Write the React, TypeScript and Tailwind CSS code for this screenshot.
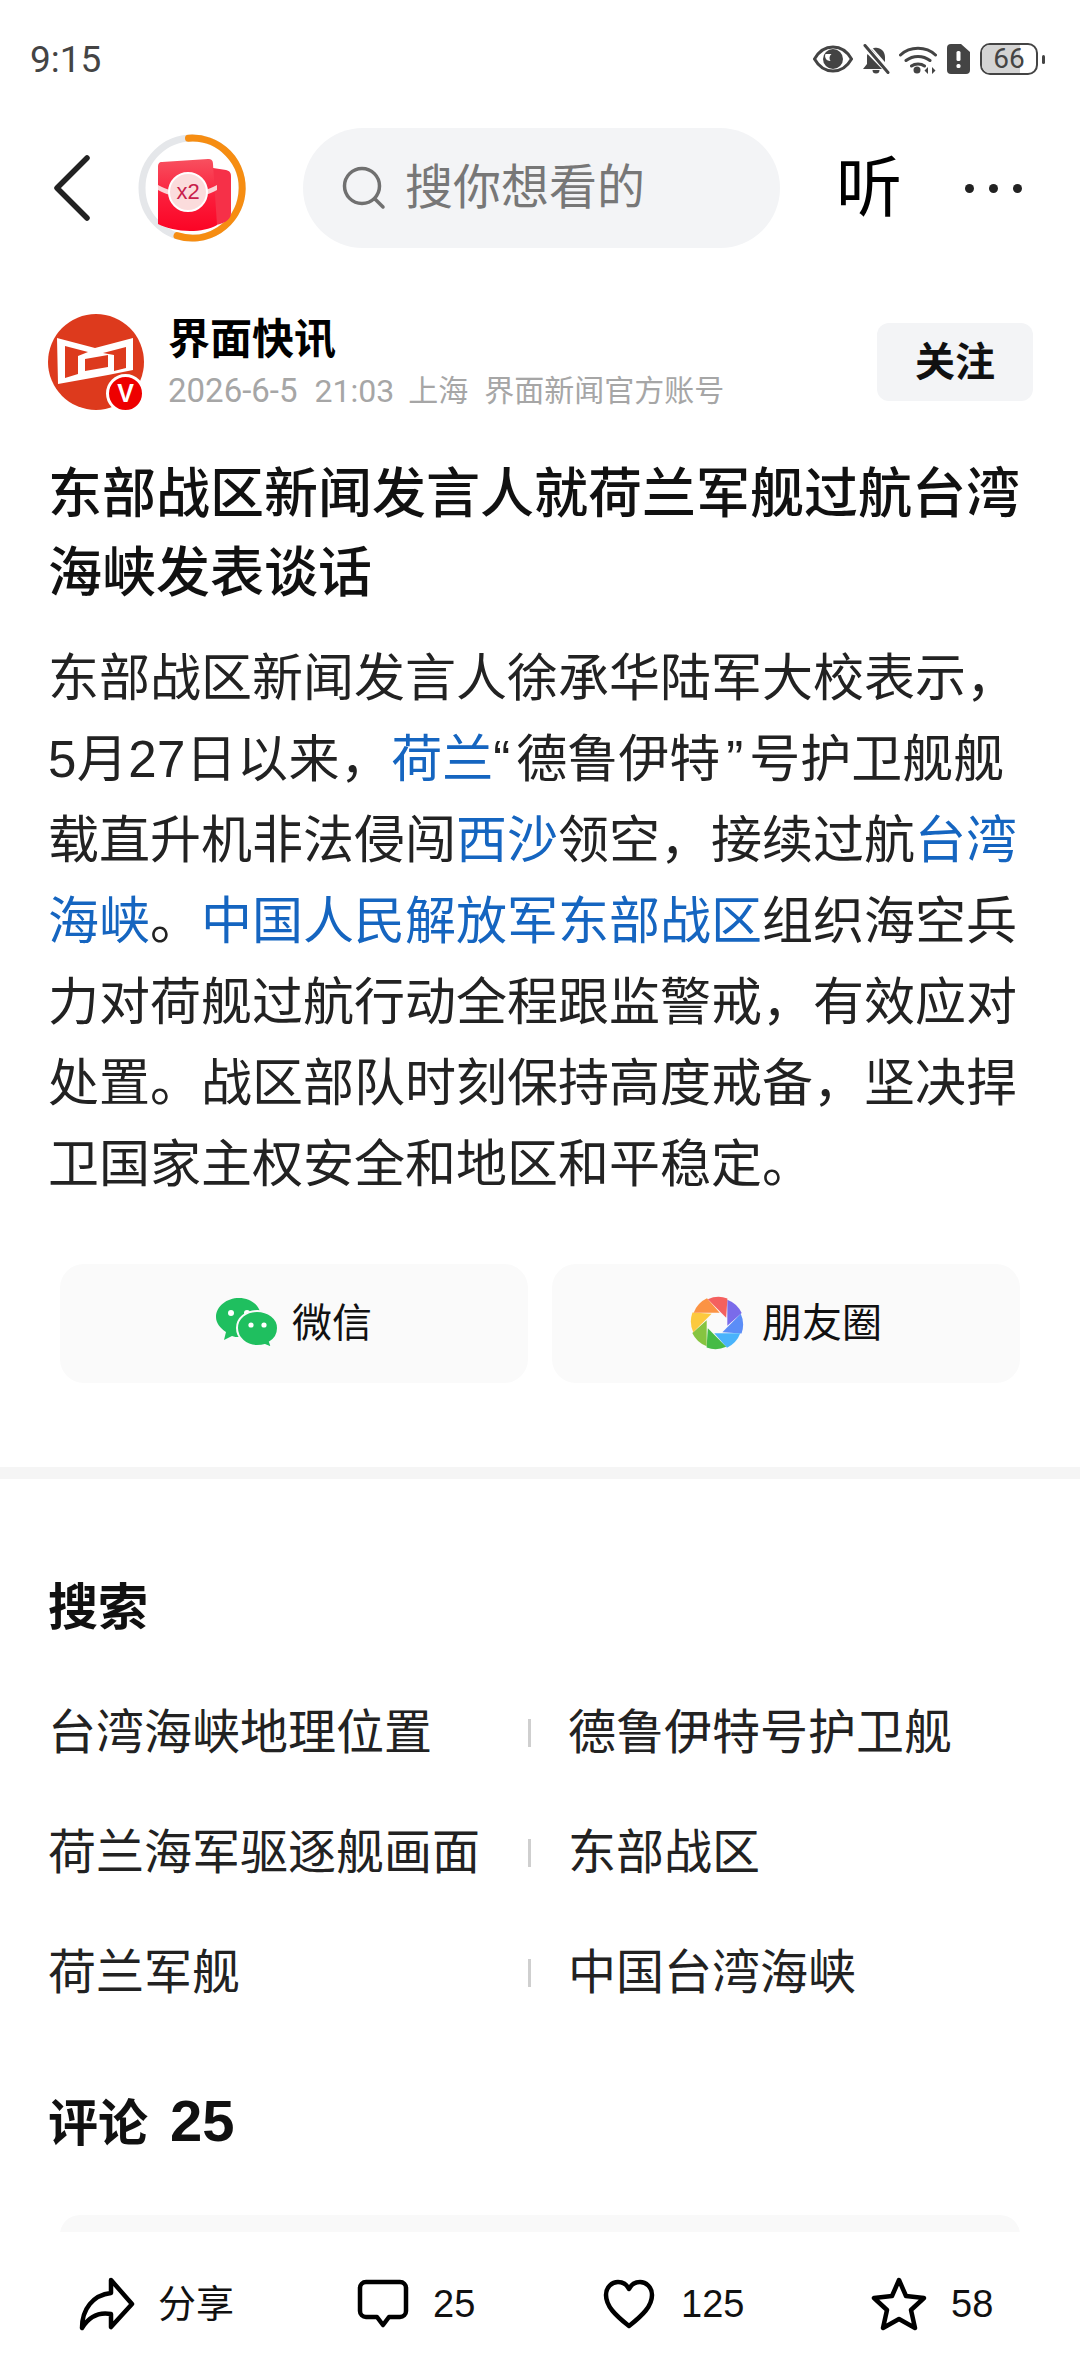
const body: { text: string; className?: string }[][] = [
  [{ text: "东部战区新闻发言人徐承华陆军大校表示，" }],
  [
    { text: "5月27日以来，", className: "tracking-[0.4px]" },
    { text: "荷兰", className: "text-[#1565c0]" },
    { text: "“", className: "mr-[6px]" },
    { text: "德鲁伊特" },
    { text: "”", className: "ml-[6px] mr-[6px]" },
    { text: "号护卫舰舰" },
  ],
  [
    { text: "载直升机非法侵闯" },
    { text: "西沙", className: "text-[#1565c0]" },
    { text: "领空，接续过航" },
    { text: "台湾", className: "text-[#1565c0]" },
  ],
  [
    { text: "海峡", className: "text-[#1565c0]" },
    { text: "。" },
    { text: "中国人民解放军东部战区", className: "text-[#1565c0]" },
    { text: "组织海空兵" },
  ],
  [{ text: "力对荷舰过航行动全程跟监警戒，有效应对" }],
  [{ text: "处置。战区部队时刻保持高度戒备，坚决捍" }],
  [{ text: "卫国家主权安全和地区和平稳定。" }],
];

const searches = [
  ["台湾海峡地理位置", "德鲁伊特号护卫舰"],
  ["荷兰海军驱逐舰画面", "东部战区"],
  ["荷兰军舰", "中国台湾海峡"],
];

function StatusIcons() {
  return (
    <div className="flex items-center">
      {/* eye */}
      <svg width="40" height="28" viewBox="0 0 40 28">
        <path d="M1.500 14C6 6 12.500 2 20 2S34 6 38.500 14C34 22 27.500 26 20 26S6 22 1.500 14Z" fill="none" stroke="#444" strokeWidth="3" />
        <circle cx="20" cy="14" r="10" fill="#444" />
        <path d="M12.500 9h6a5 5 0 0 0-1 7 5 5 0 0 1-5-7Z" fill="#fff" />
      </svg>
      {/* muted bell */}
      <svg className="ml-[10px]" width="27" height="30" viewBox="0 0 27 30">
        <path d="M11 4c5-1.500 11 2 11 9v6L8.500 5.500C9.300 4.800 10 4.300 11 4ZM4.500 10L19 25H0l4-5v-8c0-.700.200-1.300.500-2Z" fill="#444" />
        <path d="M9.500 26h7a3.500 3.500 0 0 1-7 0Z" fill="#444" />
        <path d="M2 1.500L25 28.500" stroke="#444" strokeWidth="3" strokeLinecap="round" />
        <path d="M5 0L27 25" stroke="#fff" strokeWidth="1.500" />
      </svg>
      {/* wifi */}
      <svg className="ml-[9px]" width="38" height="29" viewBox="0 0 38 29">
        <path d="M1.500 10C11 1 27 1 36.500 10M7 15.500c7-5.500 17-5.500 24 0M12.500 21c3.500-2.800 9.500-2.800 13 0" fill="none" stroke="#444" strokeWidth="3" strokeLinecap="round" />
        <circle cx="18" cy="25" r="3.500" fill="#444" />
        <path d="M29 22l-3.500 3.500 3.500 3.500ZM33 22l3.500 3.500-3.500 3.500Z" fill="#444" />
      </svg>
      {/* sim */}
      <svg className="ml-[10px]" width="23" height="30" viewBox="0 0 23 30">
        <path d="M4 0h10l9 8v18a4 4 0 0 1-4 4H4a4 4 0 0 1-4-4V4a4 4 0 0 1 4-4Z" fill="#444" />
        <rect x="9.500" y="7" width="4" height="10" rx="1.500" fill="#fff" />
        <rect x="9.500" y="20" width="4" height="4" rx="1.500" fill="#fff" />
      </svg>
      {/* battery */}
      <div className="ml-[10px] relative w-[58px] h-[32px] rounded-[10px] border-2 border-[#444] overflow-hidden flex items-center justify-center">
        <div className="absolute left-0 top-0 bottom-0 w-[71%] bg-[#d4d4d4]" />
        <span className="relative font-['Roboto',sans-serif] text-[28px] leading-none text-[#444]">66</span>
      </div>
      <div className="ml-[4px] w-[3px] h-[9px] rounded-full bg-[#444]" />
    </div>
  );
}

function RedPacket() {
  return (
    <svg width="112" height="112" viewBox="0 0 112 112">
      <defs>
        <linearGradient id="packet" x1="0" y1="0" x2="0" y2="1">
          <stop offset="0" stopColor="#f8505f" />
          <stop offset="0.55" stopColor="#fb1c3a" />
          <stop offset="1" stopColor="#fb0425" />
        </linearGradient>
      </defs>
      <circle cx="56" cy="56" r="50" fill="none" stroke="#e5e7ea" strokeWidth="7" />
      <path d="M52.500 6.200A50 50 0 1 1 41 103.700" fill="none" stroke="#f68d12" strokeWidth="7" strokeLinecap="round" />
      <path d="M77 36l13 2c4 1 5 3 5 7v36c0 6-5 9-11 11l-7 2Z" fill="#f63048" />
      <path d="M22 35c0-3 1-5 4-5l46-3c3 0 5 1 5 5l4 61c-7 4-17 6-27 6-12 0-24-3-32-7Z" fill="url(#packet)" />
      <path d="M22 53c9 5 18 7 30 7 11 0 20-2 29-7v5c-9 5-18 7-29 7-12 0-21-2-30-7Z" fill="#fbd3d6" />
      <circle cx="52" cy="60" r="19" fill="#fbdcdc" stroke="#fff" strokeWidth="2" />
      <text x="52" y="67" textAnchor="middle" fontSize="22" fontFamily="'Liberation Sans', sans-serif" fill="#c8204a">x2</text>
    </svg>
  );
}

function Avatar() {
  return (
    <div className="relative w-[97px] h-[97px] shrink-0">
      <svg width="96" height="96" viewBox="0 0 96 96">
        <circle cx="48" cy="48" r="48" fill="#dd3a1d" />
        <path
          d="M9 24L47 34 85 24V56L60 61 10 70ZM17 32V64L30 60V42L40 38ZM78 33L55 39 66 41V57L78 54ZM37 45V57L60 53V41Z"
          fill="#fff"
          fillRule="evenodd"
        />
      </svg>
      <div className="absolute left-[58px] top-[60px] w-[39px] h-[39px] rounded-full bg-[#ee0000] border-[3px] border-white flex items-center justify-center text-white text-[25px] font-bold leading-none">
        V
      </div>
    </div>
  );
}

function WeChat() {
  return (
    <svg width="62" height="50" viewBox="0 0 62 50">
      <path d="M23 0c12 0 22 8 22 19 0 11-10 20-22 20-2 0-5 0-7-1l-8 4 2-8C4 30 0 25 0 19 0 8 11 0 23 0Z" fill="#1fbf5f" />
      <circle cx="15" cy="15" r="3" fill="#fff" />
      <circle cx="31" cy="15" r="3" fill="#fff" />
      <path d="M41 13c11 0 21 7 21 17 0 6-3 11-8 14l2 6-7-3c-3 1-5 1-8 1-11 0-20-8-20-18s9-17 20-17Z" fill="#1fbf5f" stroke="#fafafa" strokeWidth="2" />
      <circle cx="35" cy="27" r="2.600" fill="#fff" />
      <circle cx="48" cy="27" r="2.600" fill="#fff" />
    </svg>
  );
}

function Moments() {
  const colors = ["#7a6bea", "#5b8df7", "#49b3fb", "#46bb46", "#86c440", "#fcc93d", "#fb9344", "#f4605f"];
  return (
    <svg width="54" height="54" viewBox="-27 -27 54 54">
      {colors.map((c, i) => (
        <path key={c} d="M10.300 -23.300A26 26 0 0 1 24.700 -10L10.300 2.700Z" fill={c} transform={`rotate(${i * 45})`} />
      ))}
    </svg>
  );
}

function BottomBar() {
  const iconClass = "fill-none stroke-black";
  return (
    <div className="h-[144px] shrink-0 flex items-center text-[38px] text-[#111]">
      <svg className={`${iconClass} ml-[79px]`} width="56" height="54" viewBox="0 0 56 54" strokeWidth="4.500" strokeLinejoin="round">
        <path d="M32 3L53 27 32 50V37C21 35 11 38 3 51 3 32 14 18 32 16Z" />
      </svg>
      <span className="ml-[23px] w-[76px]">分享</span>
      <svg className={`${iconClass} ml-[123px]`} width="52" height="50" viewBox="0 0 52 50" strokeWidth="4.500" strokeLinejoin="round">
        <path d="M9 3H43a6 6 0 0 1 6 6V32a6 6 0 0 1-6 6H32L26 46 20 38H9a6 6 0 0 1-6-6V9a6 6 0 0 1 6-6Z" />
      </svg>
      <span className="ml-[24px] w-[44px]">25</span>
      <svg className={`${iconClass} ml-[126px]`} width="52" height="50" viewBox="0 0 52 50" strokeWidth="4.500" strokeLinejoin="round">
        <path d="M26 47C12 36 3 27 3 16 3 8 9 3 15 3 20 3 24 6 26 10 28 6 32 3 37 3 43 3 49 8 49 16 49 27 40 36 26 47Z" />
      </svg>
      <span className="ml-[26px] w-[64px]">125</span>
      <svg className={`${iconClass} ml-[126px]`} width="56" height="54" viewBox="0 0 56 54" strokeWidth="4.500" strokeLinejoin="round">
        <path d="M28 3L35 19 53 21 40 33 44 51 28 42 12 51 16 33 3 21 21 19Z" />
      </svg>
      <span className="ml-[24px]">58</span>
    </div>
  );
}

export default function App() {
  return (
    <div className="w-[1080px] h-[2376px] bg-white flex flex-col overflow-hidden font-['Liberation_Sans','Noto_Sans_CJK_SC',sans-serif]">
      <div className="flex-1 min-h-0 overflow-hidden">
        {/* Status bar */}
        <div className="h-[128px] pl-[30px] pr-[35px] pt-[40px] flex items-start justify-between">
          <span className="font-['Roboto','Noto_Sans_CJK_SC',sans-serif] text-[37px] leading-[40px] text-[#444]">9:15</span>
          <div className="mt-[3px]">
            <StatusIcons />
          </div>
        </div>

        {/* Nav */}
        <div className="h-[120px] flex items-center">
          <svg className="ml-[52px] shrink-0" width="40" height="68" viewBox="0 0 40 68">
            <path d="M35 4L5 34 35 64" fill="none" stroke="#222" strokeWidth="5.500" strokeLinecap="round" strokeLinejoin="round" />
          </svg>
          <div className="ml-[44px] shrink-0 w-[112px]">
            <RedPacket />
          </div>
          <div className="ml-[55px] w-[477px] h-[120px] rounded-full bg-[#f3f4f6] flex items-center pl-[39px]">
            <svg width="44" height="44" viewBox="0 0 44 44" fill="none" stroke="#707070" strokeWidth="3.500" strokeLinecap="round">
              <circle cx="20" cy="20" r="17.500" />
              <path d="M33 33l8 8" />
            </svg>
            <span className="ml-[19px] text-[48px] leading-none text-[#777]">搜你想看的</span>
          </div>
          <span className="ml-[56px] w-[66px] text-[66px] leading-none text-black">听</span>
          <div className="ml-[63px] flex gap-[15px]">
            <div className="w-[9px] h-[9px] rounded-full bg-[#222]" />
            <div className="w-[9px] h-[9px] rounded-full bg-[#222]" />
            <div className="w-[9px] h-[9px] rounded-full bg-[#222]" />
          </div>
        </div>

        {/* Author */}
        <div className="mt-[66px] pl-[48px] pr-[47px] flex items-center">
          <Avatar />
          <div className="ml-[23px] flex-1">
            <div className="text-[42px] leading-[48px] font-bold text-black">界面快讯</div>
            <div className="mt-[9px] flex items-center text-[30px] leading-[36px] text-[#a6a6a6] whitespace-nowrap">
              <span className="font-['Roboto',sans-serif] text-[33px]">2026-6-5</span>
              <span className="ml-[17px] font-['Roboto',sans-serif] text-[32px]">21:03</span>
              <span className="ml-[14px]">上海</span>
              <span className="ml-[16px]">界面新闻官方账号</span>
            </div>
          </div>
          <div className="mb-[1px] w-[156px] h-[78px] rounded-[12px] bg-[#f3f4f6] flex items-center justify-center text-[40px] font-bold text-[#111]">关注</div>
        </div>

        {/* Title */}
        <h1 className="mt-[44px] px-[48px] text-[54px] leading-[79px] font-medium text-[#111]">
          东部战区新闻发言人就荷兰军舰过航台湾
          <br />
          海峡发表谈话
        </h1>

        {/* Body */}
        <div className="mt-[25px] px-[48px] text-[51px] leading-[81px] text-[#222]">
          {body.map((line, i) => (
            <div key={i} className="whitespace-nowrap">
              {line.map((part, j) => (
                <span key={j} className={part.className}>
                  {part.text}
                </span>
              ))}
            </div>
          ))}
        </div>

        {/* Share */}
        <div className="mt-[58.5px] px-[60px] flex gap-[24px]">
          <div className="flex-1 h-[119px] rounded-[24px] bg-[#fafafa] flex items-center justify-center text-[40px] text-[#111]">
            <WeChat />
            <span className="ml-[14px]">微信</span>
          </div>
          <div className="flex-1 h-[119px] rounded-[24px] bg-[#fafafa] flex items-center justify-center text-[40px] text-[#111]">
            <Moments />
            <span className="ml-[18px]">朋友圈</span>
          </div>
        </div>

        <div className="mt-[84px] h-[12px] bg-[#f5f5f5]" />

        {/* Search */}
        <h2 className="mt-[99px] px-[48px] text-[50px] leading-[60px] font-bold text-[#111]">搜索</h2>
        <div className="mt-[65px] px-[48px] flex flex-col gap-[60px]">
          {searches.map(([left, right]) => (
            <div key={left} className="flex items-center h-[60px] text-[48px] text-[#222]">
              <span className="w-[480px] whitespace-nowrap">{left}</span>
              <div className="w-[3px] h-[28px] bg-[#cfcfcf]" />
              <span className="ml-[37px] whitespace-nowrap">{right}</span>
            </div>
          ))}
        </div>

        {/* Comments */}
        <h2 className="mt-[88px] px-[48px] text-[50px] leading-[60px] font-bold text-[#111]">
          评论 <span className="ml-[8px] text-[58px]">25</span>
        </h2>
        <div className="mt-[61px] mx-[60px] h-[40px] rounded-[20px] bg-[#f9f9f9]" />
      </div>
      <BottomBar />
    </div>
  );
}
